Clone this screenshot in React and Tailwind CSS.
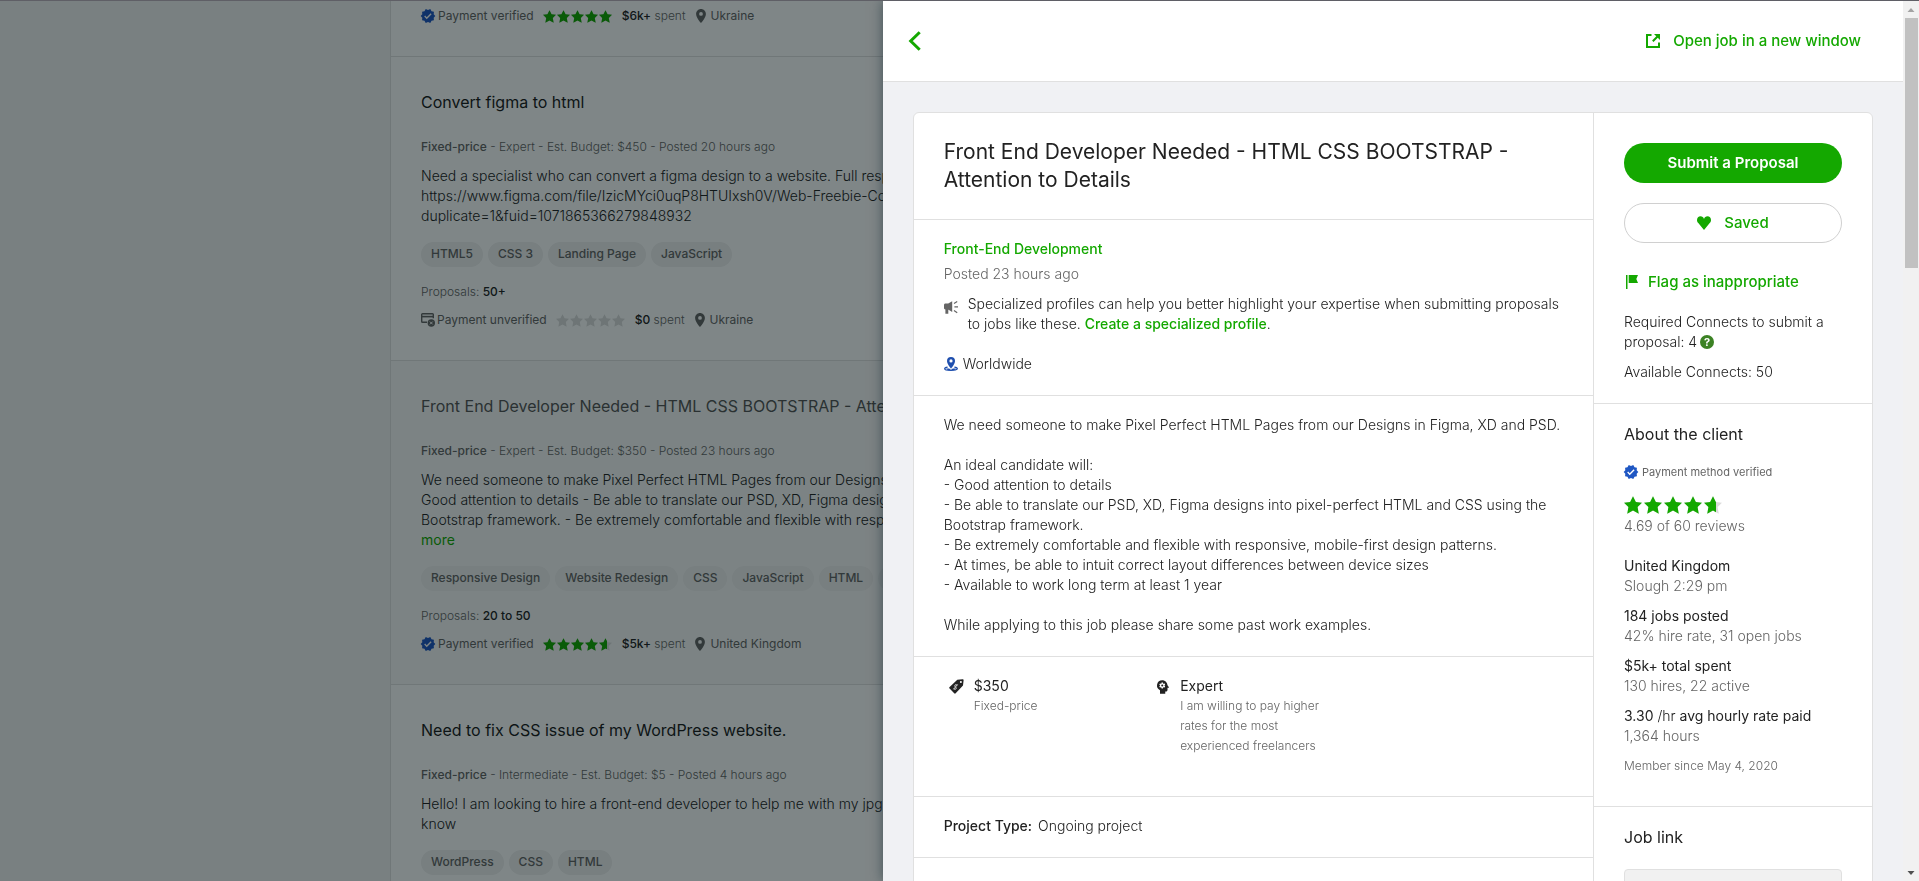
import React from "react";
import { MdVerified, MdPsychology } from "react-icons/md";

const STAR = "M10 0.3 13.2 6.6 20 7.4 15.1 12.2 16.4 19.6 10 16.2 3.6 19.6 4.9 12.2 0 7.4 6.8 6.6Z";

function StarRow({ gap, size }) {
  return (
    <span className={`flex w-max ${gap}`}>
      {[0, 1, 2, 3, 4].map((i) => (
        <svg key={i} viewBox="0 0 20 20" className={`shrink-0 fill-current ${size}`} aria-hidden="true">
          <path d={STAR} />
        </svg>
      ))}
    </span>
  );
}

function Stars({ value, gap = "gap-px", size = "size-[13px]" }) {
  return (
    <span className="relative inline-block shrink-0" role="img" aria-label={`${value} out of 5 stars`}>
      <span className="text-[#dcdcdc]">
        <StarRow gap={gap} size={size} />
      </span>
      {value > 0 && (
        <span
          className="absolute inset-y-0 left-0 overflow-hidden text-[#14a800]"
          style={{ width: `${value * 20}%` }}
        >
          <StarRow gap={gap} size={size} />
        </span>
      )}
    </span>
  );
}

function PinIcon() {
  return (
    <svg viewBox="5 2 14 20" className="h-[14px] w-[10px] shrink-0 fill-[#656565]" aria-hidden="true">
      <path d="M12 2C8.13 2 5 5.13 5 9c0 5.25 7 13 7 13s7-7.75 7-13c0-3.87-3.13-7-7-7zm0 9.7a2.7 2.7 0 010-5.4 2.7 2.7 0 010 5.4z" />
    </svg>
  );
}

function CardUnverifiedIcon() {
  return (
    <svg viewBox="0 0 14 14" className="size-[14px] shrink-0" fill="none" stroke="#656565" aria-hidden="true">
      <path d="M6 9.3H1.5a.8.8 0 0 1-.8-.8v-7a.8.8 0 0 1 .8-.8h10a.8.8 0 0 1 .8.8v3.7" strokeWidth="1.4" />
      <path d="M.7 3.6h11.6" strokeWidth="1.6" />
      <circle cx="10.3" cy="10" r="3.7" fill="#656565" stroke="none" />
      <path d="M8.9 8.6l2.8 2.8M11.7 8.6l-2.8 2.8" stroke="#fff" strokeWidth="1" />
    </svg>
  );
}

function MegaphoneIcon() {
  return (
    <svg viewBox="0 0 14 13" className="mt-[7px] h-[13px] w-[14px] shrink-0" aria-hidden="true">
      <path d="M0 4.2C0 3 .8 2.6 2 2.6H4.2L8.2.2V11L4.6 8.8H4.3V12.8H1.4V8.5C.5 8.3 0 7.8 0 7Z" fill="#656565" />
      <path d="M10 2.6 13.2.6M10.4 5.8H14M10 9.4l3.2 2.4" stroke="#656565" strokeWidth="1.2" fill="none" />
    </svg>
  );
}

function WorldPinIcon() {
  return (
    <svg viewBox="0 0 14 14" className="size-[14px] shrink-0" aria-hidden="true">
      <path d="M7 0a4 4 0 0 0-4 4c0 2.9 4 7.6 4 7.6S11 6.900 11 4a4 4 0 0 0-4-4zm0 5.500a1.600 1.600 0 1 1 0-3.200 1.600 1.600 0 0 1 0 3.200z" fill="#1f4fae" />
      <path d="M3.600 10.200C1.900 10.500.7 11 .7 11.700c0 1 2.800 1.600 6.300 1.600s6.300-.6 6.300-1.600c0-.7-1.200-1.200-2.900-1.500" fill="none" stroke="#1f4fae" strokeWidth="1.300" />
      <path d="M2 11.500h3.200L7 13l1.800-1.500H12L10 13.300H4z" fill="#1f4fae" />
    </svg>
  );
}

function PriceTagIcon() {
  return (
    <svg viewBox="0 0 15 15" className="mt-[3px] size-[15px] shrink-0" aria-hidden="true">
      <path d="M8.300.8 13.600.2a.9.9 0 0 1 1 1L14 6.600 6.700 14.300a1 1 0 0 1-1.500 0L.6 9.500a1 1 0 0 1 0-1.500z" fill="#222" />
      <circle cx="11.900" cy="3" r="1" fill="#fff" />
      <path d="M8.200 6.300C7.500 5.600 6.500 5.500 6 6.100s-.2 1.300.5 1.900 1 1.400.4 2-1.500.4-2.200-.3M8.700 5.400 4.500 10.300" fill="none" stroke="#fff" strokeWidth=".8" />
    </svg>
  );
}

const JOBS = [
  {
    title: "Convert figma to html",
    terms: "Expert - Est. Budget: $450 - Posted 20 hours ago",
    lines: [
      "Need a specialist who can convert a figma design to a website. Full responsive",
      "https://www.figma.com/file/IzicMYci0uqP8HTUIxsh0V/Web-Freebie-Co",
      "duplicate=1&fuid=1071865366279848932",
    ],
    tags: ["HTML5", "CSS 3", "Landing Page", "JavaScript"],
    proposals: "50+",
    client: { verified: false, rating: 0, spent: "$0", country: "Ukraine" },
  },
  {
    title: "Front End Developer Needed - HTML CSS BOOTSTRAP - Attention to Details",
    terms: "Expert - Est. Budget: $350 - Posted 23 hours ago",
    visited: true,
    lines: [
      "We need someone to make Pixel Perfect HTML Pages from our Designs in Figma,",
      "Good attention to details - Be able to translate our PSD, XD, Figma designs",
      "Bootstrap framework. - Be extremely comfortable and flexible with responsive",
    ],
    more: true,
    tags: ["Responsive Design", "Website Redesign", "CSS", "JavaScript", "HTML", "CSS 3"],
    proposals: "20 to 50",
    client: { verified: true, rating: 4.69, spent: "$5k+", country: "United Kingdom" },
  },
  {
    title: "Need to fix CSS issue of my WordPress website.",
    terms: "Intermediate - Est. Budget: $5 - Posted 4 hours ago",
    lines: ["Hello! I am looking to hire a front-end developer to help me with my jpg. I", "know"],
    tags: ["WordPress", "CSS", "HTML"],
  },
];

function ClientRow({ verified, rating, spent, country }) {
  return (
    <div className="flex h-5 items-center text-xs text-[#656565]">
      {verified ? (
        <MdVerified className="-ml-px size-4 shrink-0 text-[#1f57c3]" aria-hidden="true" />
      ) : (
        <CardUnverifiedIcon />
      )}
      <span className="ml-[2px] font-normal">{verified ? "Payment verified" : "Payment unverified"}</span>
      <span className="ml-[9px] flex items-center pt-px">
        <Stars value={rating} />
      </span>
      <span className="ml-[10px]">
        <strong className="font-medium text-[#222]">{spent}</strong> spent
      </span>
      <span className="ml-[10px] flex items-center gap-[5px] font-normal">
        <PinIcon />
        {country}
      </span>
    </div>
  );
}

function JobItem({ job }) {
  return (
    <article
      className={`border-b border-[#e0e0e0] px-[30px] py-[30px] whitespace-nowrap ${job.visited ? "bg-[#f9f9f9]" : ""}`}
    >
      <h2 className={`text-base leading-[30px] font-normal ${job.visited ? "text-[#555]" : "text-[#1a1a1a]"}`}>
        <a href="#job">{job.title}</a>
      </h2>
      <p className="mt-5 text-xs leading-5 text-[#656565]">
        <strong className="font-medium">Fixed-price</strong> - {job.terms}
      </p>
      <div className="mt-[9px] text-sm leading-5 text-[#222]">
        {job.lines.map((l) => (
          <p key={l}>{l}</p>
        ))}
        {job.more && (
          <button type="button" className="block font-normal text-[#14a800]">
            more
          </button>
        )}
      </div>
      <div className="mt-4 flex gap-[5px]">
        {job.tags.map((t) => (
          <a
            key={t}
            href="#skill"
            className="rounded-full bg-[#f0f0f0] px-[10px] pb-px text-xs leading-6 font-medium text-[#656565]"
          >
            {t}
          </a>
        ))}
      </div>
      {job.client && (
        <>
          <p className="mt-[15px] text-xs leading-5 text-[#656565]">
            Proposals: <strong className="font-medium text-[#222]">{job.proposals}</strong>
          </p>
          <div className="mt-2">
            <ClientRow {...job.client} />
          </div>
        </>
      )}
    </article>
  );
}

function JobDetails() {
  return (
    <div className="min-w-0 flex-1 divide-y divide-[#e0e0e0] border-r border-[#e0e0e0]">
      <header className="px-[30px] py-[25px]">
        <h1 className="text-[21px] leading-7 font-normal text-[#222]">
          Front End Developer Needed - HTML CSS BOOTSTRAP - Attention to Details
        </h1>
      </header>

      <section className="px-[30px] pt-[19px] pb-[21px]">
        <a href="#category" className="block font-medium text-[#14a800]">
          Front-End Development
        </a>
        <p className="mt-[5px] text-[#656565]">Posted 23 hours ago</p>
        <div className="mt-[10px] flex gap-[10px]">
          <MegaphoneIcon />
          <p>
            Specialized profiles can help you better highlight your expertise when submitting proposals to jobs like
            these.{" "}
            <a href="#profile" className="font-medium text-[#14a800]">
              Create a specialized profile
            </a>
            .
          </p>
        </div>
        <p className="mt-5 flex items-center gap-[5px]">
          <WorldPinIcon />
          Worldwide
        </p>
      </section>

      <section className="px-[30px] pt-[19px] pb-[21px] whitespace-pre-line">
        {`We need someone to make Pixel Perfect HTML Pages from our Designs in Figma, XD and PSD.

An ideal candidate will:
- Good attention to details
- Be able to translate our PSD, XD, Figma designs into pixel-perfect HTML and CSS using the Bootstrap framework.
- Be extremely comfortable and flexible with responsive, mobile-first design patterns.
- At times, be able to intuit correct layout differences between device sizes
- Available to work long term at least 1 year

While applying to this job please share some past work examples.`}
      </section>

      <ul className="grid grid-cols-3 px-[30px] pt-[19px] pb-10">
        <li className="flex gap-[10px] pl-[5px]">
          <PriceTagIcon />
          <div className="pr-10">
            <strong className="block font-normal">$350</strong>
            <small className="block text-xs leading-5 text-[#656565]">Fixed-price</small>
          </div>
        </li>
        <li className="flex gap-2 pl-1">
          <MdPsychology className="mt-[2px] size-[18px] shrink-0 -scale-x-100 text-[#222]" aria-hidden="true" />
          <div className="pr-[30px]">
            <strong className="block font-normal">Expert</strong>
            <small className="block text-xs leading-5 text-[#656565]">
              I am willing to pay higher rates for the most experienced freelancers
            </small>
          </div>
        </li>
      </ul>

      <section className="px-[30px] pt-[19px] pb-[21px]">
        <strong className="mr-[6px] font-medium">Project Type:</strong>
        <span>Ongoing project</span>
      </section>

      <section className="h-[60px]" />
    </div>
  );
}

const CLIENT_FACTS = [
  ["United Kingdom", "Slough 2:29 pm"],
  ["184 jobs posted", "42% hire rate, 31 open jobs"],
  ["$5k+ total spent", "130 hires, 22 active"],
];

function ClientPanel() {
  return (
    <aside className="w-[278px] shrink-0 divide-y divide-[#e0e0e0]">
      <section className="px-[30px] pt-[30px] pb-[21px]">
        <button type="button" className="h-10 w-full rounded-full bg-[#14a800] text-[15px] font-semibold text-white">
          Submit a Proposal
        </button>
        <button
          type="button"
          className="mt-5 flex h-10 w-full items-center justify-center gap-[13px] rounded-full border border-[#d0d0d0] text-[15px] font-medium text-[#14a800]"
        >
          <svg viewBox="0 0 14 14" className="size-[14px] fill-current" aria-hidden="true">
            <path d="M3.500.3C5.200.3 6.500 1.300 7 3 7.500 1.300 8.800.3 10.500.3 12.500.3 14 1.900 14 4c0 1.300-.5 2.200-1.300 3.100L7 14 1.300 7.100C.5 6.200 0 5.300 0 4 0 1.900 1.500.3 3.500.3Z" />
          </svg>
          Saved
        </button>
        <button
          type="button"
          className="mt-[29px] flex items-center gap-[10px] pl-[2px] text-[15px] leading-5 font-medium whitespace-nowrap text-[#14a800]"
        >
          <svg viewBox="0 0 12 14" className="h-[14px] w-3 fill-current" aria-hidden="true">
            <path d="M0 0h1.500v14H0zM2.700 0H12l-1.700 4L12 8H2.700z" />
          </svg>
          Flag as inappropriate
        </button>
        <div className="mt-5">
          Required Connects to submit a
          <div className="flex items-center gap-[3px]">
            proposal: 4
            <button
              type="button"
              aria-label="Help"
              className="size-[14px] rounded-full bg-[#3c8224] text-center text-[11px] leading-[14px] font-bold text-white"
            >
              ?
            </button>
          </div>
        </div>
        <p className="mt-[10px]">Available Connects: 50</p>
      </section>

      <section className="px-[30px] pt-5 pb-[30px]">
        <h2 className="text-base leading-5 font-normal">About the client</h2>
        <p className="mt-[18px] flex h-5 items-center gap-[3px] text-[11px] font-normal text-[#656565]">
          <MdVerified className="-ml-px size-4 shrink-0 text-[#1f57c3]" aria-hidden="true" />
          Payment method verified
        </p>
        <div className="mt-[14px] flex h-[18px]">
          <Stars value={4.69} gap="gap-[2px]" size="size-[18px]" />
        </div>
        <p className="mt-[2px] text-[#656565]">4.69 of 60 reviews</p>
        <ul className="mt-5 flex flex-col gap-[10px]">
          {CLIENT_FACTS.map(([head, sub]) => (
            <li key={head}>
              <strong className="block font-normal">{head}</strong>
              <span className="block text-[#656565]">{sub}</span>
            </li>
          ))}
          <li>
            <strong className="block font-normal">
              3.30 <span className="font-light">/hr</span> avg hourly rate paid
            </strong>
            <span className="block text-[#656565]">1,364 hours</span>
          </li>
          <li className="text-xs leading-5 text-[#656565]">Member since May 4, 2020</li>
        </ul>
      </section>

      <section className="px-[30px] pt-5 pb-[30px]">
        <h2 className="text-base leading-5 font-normal">
          <label htmlFor="job-link">Job link</label>
        </h2>
        <input
          id="job-link"
          readOnly
          className="mt-[22px] h-10 w-full rounded border border-[#e0e0e0] bg-[#f1f1f1] px-3"
        />
      </section>
    </aside>
  );
}

function Scrollbar() {
  return (
    <div className="flex w-4 shrink-0 flex-col bg-[#f1f1f1]" aria-hidden="true">
      <svg viewBox="0 0 16 17" className="h-[17px] w-4 fill-[#a3a3a3]">
        <path d="M4.500 11h7L8 7z" />
      </svg>
      <div className="ml-[2px] h-[250px] w-[13px] bg-[#c1c1c1]" />
      <svg viewBox="0 0 16 17" className="mt-auto h-[17px] w-4 fill-[#505050]">
        <path d="M4.500 7h7L8 11z" />
      </svg>
    </div>
  );
}

export default function App() {
  return (
    <div className="flex h-screen flex-col overflow-hidden bg-[#f2f2f2] font-['Inter','Liberation_Sans',sans-serif] text-sm leading-5 font-light text-[#222]">
      <div className="relative z-20 h-px shrink-0 bg-[#5f5f66]" />
      <main className="ml-[390px] flex-1 overflow-hidden border-l border-[#e0e0e0] bg-white">
        <div className="border-b border-[#e0e0e0] px-[30px] pt-[5px] pb-[30px] whitespace-nowrap">
          <ClientRow verified rating={5} spent="$6k+" country="Ukraine" />
        </div>
        {JOBS.map((job) => (
          <JobItem key={job.title} job={job} />
        ))}
      </main>

      <div className="fixed inset-x-0 top-px bottom-0 bg-[rgba(0,14,15,0.5)]" />

      <div
        role="dialog"
        aria-label="Job details"
        className="fixed top-px right-0 bottom-0 left-[46%] z-10 flex bg-[#f0f1f4] shadow-[0_0_12px_rgba(0,25,35,0.5)]"
      >
        <div className="min-w-0 flex-1 overflow-hidden">
          <div className="flex h-[81px] items-center justify-between border-b border-[#e0e0e0] bg-white pr-[42px] pl-[25px]">
            <button type="button" aria-label="Back" className="text-[#14a800]">
              <svg viewBox="0 0 14 20" className="h-5 w-[14px]" fill="none" stroke="currentColor" aria-hidden="true">
                <path d="M11.700 1.200 2.700 10l9 8.800" strokeWidth="3" />
              </svg>
            </button>
            <a href="#window" className="flex items-center gap-[13px] text-[15px] font-medium text-[#14a800]">
              <svg viewBox="0 0 14 14" className="size-[14px]" fill="none" stroke="currentColor" aria-hidden="true">
                <path d="M5.500 1H1v12h12V8.500M6.800 7.200 12.300 1.700" strokeWidth="2" />
                <path d="M8 0h6v6z" fill="currentColor" stroke="none" />
              </svg>
              Open job in a new window
            </a>
          </div>
          <div className="p-[30px]">
            <div className="flex rounded-md border border-[#e0e0e0] bg-white">
              <JobDetails />
              <ClientPanel />
            </div>
          </div>
        </div>
        <Scrollbar />
      </div>
    </div>
  );
}
